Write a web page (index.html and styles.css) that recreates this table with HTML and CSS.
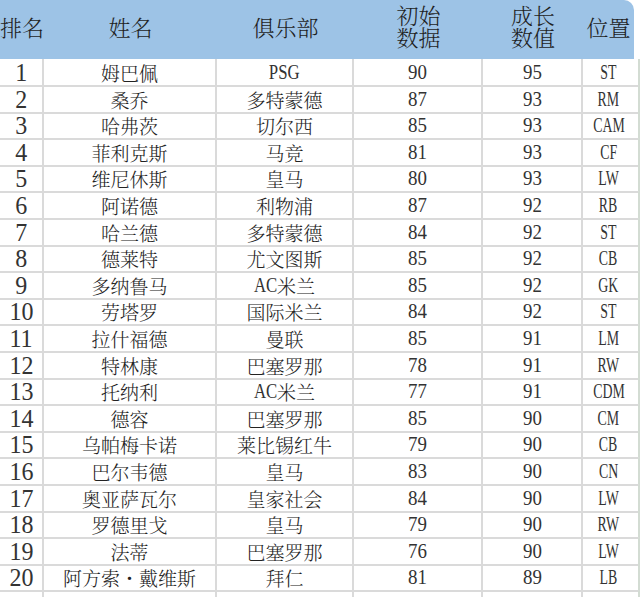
FILE: index.html
```html
<!DOCTYPE html>
<html lang="zh">
<head>
<meta charset="utf-8">
<title>排名</title>
<link rel="stylesheet" href="styles.css">
</head>
<body>
<div class="sheet">
  <div class="head">
    <div>排名</div>
    <div>姓名</div>
    <div>俱乐部</div>
    <div class="two"><span>初始</span><span>数据</span></div>
    <div class="two"><span>成长</span><span>数值</span></div>
    <div>位置</div>
  </div>
  <div class="rows">
    <div class="row"><div><span class="rk">1</span></div><div>姆巴佩</div><div><span class="lt">PSG</span></div><div><span class="n">90</span></div><div><span class="n">95</span></div><div><span class="pos">ST</span></div></div>
    <div class="row"><div><span class="rk">2</span></div><div>桑乔</div><div>多特蒙德</div><div><span class="n">87</span></div><div><span class="n">93</span></div><div><span class="pos">RM</span></div></div>
    <div class="row"><div><span class="rk">3</span></div><div>哈弗茨</div><div>切尔西</div><div><span class="n">85</span></div><div><span class="n">93</span></div><div><span class="pos">CAM</span></div></div>
    <div class="row"><div><span class="rk">4</span></div><div>菲利克斯</div><div>马竞</div><div><span class="n">81</span></div><div><span class="n">93</span></div><div><span class="pos">CF</span></div></div>
    <div class="row"><div><span class="rk">5</span></div><div>维尼休斯</div><div>皇马</div><div><span class="n">80</span></div><div><span class="n">93</span></div><div><span class="pos">LW</span></div></div>
    <div class="row"><div><span class="rk">6</span></div><div>阿诺德</div><div>利物浦</div><div><span class="n">87</span></div><div><span class="n">92</span></div><div><span class="pos">RB</span></div></div>
    <div class="row"><div><span class="rk">7</span></div><div>哈兰德</div><div>多特蒙德</div><div><span class="n">84</span></div><div><span class="n">92</span></div><div><span class="pos">ST</span></div></div>
    <div class="row"><div><span class="rk">8</span></div><div>德莱特</div><div>尤文图斯</div><div><span class="n">85</span></div><div><span class="n">92</span></div><div><span class="pos">CB</span></div></div>
    <div class="row"><div><span class="rk">9</span></div><div>多纳鲁马</div><div><span class="lt">AC</span>米兰</div><div><span class="n">85</span></div><div><span class="n">92</span></div><div><span class="pos">GK</span></div></div>
    <div class="row"><div><span class="rk">10</span></div><div>劳塔罗</div><div>国际米兰</div><div><span class="n">84</span></div><div><span class="n">92</span></div><div><span class="pos">ST</span></div></div>
    <div class="row"><div><span class="rk">11</span></div><div>拉什福德</div><div>曼联</div><div><span class="n">85</span></div><div><span class="n">91</span></div><div><span class="pos">LM</span></div></div>
    <div class="row"><div><span class="rk">12</span></div><div>特林康</div><div>巴塞罗那</div><div><span class="n">78</span></div><div><span class="n">91</span></div><div><span class="pos">RW</span></div></div>
    <div class="row"><div><span class="rk">13</span></div><div>托纳利</div><div><span class="lt">AC</span>米兰</div><div><span class="n">77</span></div><div><span class="n">91</span></div><div><span class="pos">CDM</span></div></div>
    <div class="row"><div><span class="rk">14</span></div><div>德容</div><div>巴塞罗那</div><div><span class="n">85</span></div><div><span class="n">90</span></div><div><span class="pos">CM</span></div></div>
    <div class="row"><div><span class="rk">15</span></div><div>乌帕梅卡诺</div><div>莱比锡红牛</div><div><span class="n">79</span></div><div><span class="n">90</span></div><div><span class="pos">CB</span></div></div>
    <div class="row"><div><span class="rk">16</span></div><div>巴尔韦德</div><div>皇马</div><div><span class="n">83</span></div><div><span class="n">90</span></div><div><span class="pos">CN</span></div></div>
    <div class="row"><div><span class="rk">17</span></div><div>奥亚萨瓦尔</div><div>皇家社会</div><div><span class="n">84</span></div><div><span class="n">90</span></div><div><span class="pos">LW</span></div></div>
    <div class="row"><div><span class="rk">18</span></div><div>罗德里戈</div><div>皇马</div><div><span class="n">79</span></div><div><span class="n">90</span></div><div><span class="pos">RW</span></div></div>
    <div class="row"><div><span class="rk">19</span></div><div>法蒂</div><div>巴塞罗那</div><div><span class="n">76</span></div><div><span class="n">90</span></div><div><span class="pos">LW</span></div></div>
    <div class="row"><div><span class="rk">20</span></div><div>阿方索・戴维斯</div><div>拜仁</div><div><span class="n">81</span></div><div><span class="n">89</span></div><div><span class="pos">LB</span></div></div>
    <div class="row"><div></div><div></div><div></div><div></div><div></div><div></div></div>
  </div>
</div>
</body>
</html>
```
FILE: styles.css
```css
html, body {
  margin: 0;
  padding: 0;
  background: #ffffff;
}
body {
  font-family: "Noto Serif CJK SC", "Noto Sans CJK SC", sans-serif;
  color: #222222;
  overflow: hidden;
}
.sheet {
  width: 640px;
}
.head {
  display: grid;
  grid-template-columns: 44px 173px 137px 129px 100px 51px;
  width: 634px;
  height: 59px;
  background: #9dc3e6;
  border-top-right-radius: 10px;
  font-size: 22px;
  font-weight: 300;
  color: #1f1f1f;
}
.head > div {
  display: flex;
  align-items: center;
  justify-content: center;
  text-align: center;
  line-height: 24px;
  padding-bottom: 6px;
  box-sizing: border-box;
}
.head > .two {
  flex-direction: column;
  line-height: 21px;
  padding-bottom: 8px;
}
.head > .two > span {
  display: block;
  height: 22px;
}
.row {
  display: grid;
  grid-template-columns: 44px 173px 137px 129px 100px 57px;
  height: 26.6px;
}
.row > div {
  display: flex;
  align-items: center;
  justify-content: center;
  box-sizing: border-box;
  border-right: 2px solid #dadada;
  border-bottom: 2px solid #dadada;
  font-size: 19px;
  font-weight: 300;
  line-height: 1;
  white-space: nowrap;
  padding-top: 1px;
}
.row > div:last-child {
  border-right-color: #d3dcd3;
  padding-right: 4px;
}
.rk, .n, .lt, .pos {
  display: inline-block;
  font-family: "Liberation Serif", serif;
  font-weight: 400;
  color: #333333;
}
.rk {
  font-size: 25px;
  transform: scaleX(0.96);
}
.n {
  font-size: 21px;
  transform: scaleX(0.9);
}
.lt {
  font-size: 21px;
  transform: scaleX(0.8);
  margin: 0 -3px;
}
.pos {
  font-size: 21px;
  transform: scaleX(0.66);
}
```
